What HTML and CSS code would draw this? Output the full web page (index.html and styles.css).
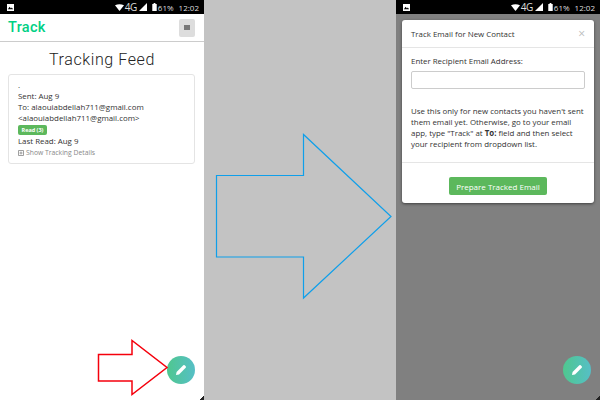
FILE: index.html
```html
<!DOCTYPE html>
<html lang="en">
<head>
    <meta charset="UTF-8">
    <title>Track</title>
    <link rel="stylesheet" href="styles.css">
</head>
<body>

    <div class="phone phone-left">
        <div class="statusbar">
            <svg class="pic" viewBox="0 0 8 8"><path d="M0 0h8v8H0z" fill="#fff"/><path d="M1 6l2-3 1.500 2 1-1L7 6z" fill="#000"/></svg>
            <div class="status-right">
                <svg class="wifi" viewBox="0 0 12 9"><path d="M0 1.500Q6-1.500 12 1.500L6 9z" fill="#fff"/></svg>
                <span class="net">4G</span>
                <svg class="signal" viewBox="0 0 8 8"><path d="M8 0v8H0z" fill="#fff"/></svg>
                <svg class="battery" viewBox="0 0 5 9"><path d="M1.500 0h2v1H5v8H0V1h1.500z" fill="#fff"/></svg>
                <span>61%</span>
                <span class="clock">12:02</span>
            </div>
        </div>
        <div class="navbar">
            <span class="brand">Track</span>
            <button class="toggler"><span class="toggler-icon"></span></button>
        </div>
        <h1>Tracking Feed</h1>
        <div class="card">
            <div>.</div>
            <div>Sent: Aug 9</div>
            <div>To: alaouiabdellah711@gmail.com</div>
            <div>&lt;alaouiabdellah711@gmail.com&gt;</div>
            <div class="badge-row"><span class="badge">Read (3)</span></div>
            <div>Last Read: Aug 9</div>
            <div class="details">
                <svg class="plus" viewBox="0 0 6 6"><path d="M.5.500h5v5h-5zM3 1.500v3M1.500 3h3" fill="none" stroke="#888" stroke-width="0.800"/></svg>
                Show Tracking Details
            </div>
        </div>
        <div class="fab">
            <svg viewBox="0 0 12 12"><path d="M1 11l.6-3L8.300 1.300a1 1 0 0 1 1.400 0l1 1a1 1 0 0 1 0 1.400L4 10.400z" fill="#fff"/></svg>
        </div>
        <div class="corner"></div>
    </div>

    <div class="middle"></div>

    <div class="phone phone-right">
        <div class="statusbar">
            <svg class="pic" viewBox="0 0 8 8"><path d="M0 0h8v8H0z" fill="#fff"/><path d="M1 6l2-3 1.500 2 1-1L7 6z" fill="#000"/></svg>
            <div class="status-right">
                <svg class="wifi" viewBox="0 0 12 9"><path d="M0 1.500Q6-1.500 12 1.500L6 9z" fill="#fff"/></svg>
                <span class="net">4G</span>
                <svg class="signal" viewBox="0 0 8 8"><path d="M8 0v8H0z" fill="#fff"/></svg>
                <svg class="battery" viewBox="0 0 5 9"><path d="M1.500 0h2v1H5v8H0V1h1.500z" fill="#fff"/></svg>
                <span>61%</span>
                <span class="clock">12:02</span>
            </div>
        </div>
        <div class="modal">
            <div class="modal-header">
                <span>Track Email for New Contact</span>
                <span class="close">×</span>
            </div>
            <div class="modal-body">
                <label>Enter Recipient Email Address:</label>
                <input type="text" class="email-input">
                <p>Use this only for new contacts you haven't sent them email yet. Otherwise, go to your email app, type "Track" at <b>To:</b> field and then select your recipient from dropdown list.</p>
            </div>
            <div class="modal-footer">
                <button class="prepare">Prepare Tracked Email</button>
            </div>
        </div>
        <div class="fab">
            <svg viewBox="0 0 12 12"><path d="M1 11l.6-3L8.300 1.300a1 1 0 0 1 1.400 0l1 1a1 1 0 0 1 0 1.400L4 10.400z" fill="#fff"/></svg>
        </div>
        <div class="corner"></div>
    </div>

    <!-- the two arrows drawn over the screenshots -->
    <svg class="arrows" viewBox="0 0 600 400">
        <path d="M98.500 354.500H132V340.500L167 367.500L132 394.500V381H98.500z" fill="#fff" stroke="#f5000c" stroke-width="1.500"/>
        <path d="M216.500 175.500H303.500V134.500L391 216.500L303.500 298V257H216.500z" fill="none" stroke="#0f9fea" stroke-width="1.200"/>
    </svg>

</body>
</html>
```

FILE: styles.css
```css
* {
    margin: 0;
    padding: 0;
    box-sizing: border-box;
}
body {
    display: flex;
    width: 600px;
    height: 400px;
    overflow: hidden;
    background-color: #c3c3c3;
    font-family: "Open Sans", sans-serif;
    color: #333;
}
.phone {
    position: relative;
    width: 204px;
    height: 400px;
    overflow: hidden;
    flex-shrink: 0;
}
.phone-left {
    background-color: white;
}
.phone-right {
    background-color: #808080;
}
.middle {
    flex-grow: 1;
    background-color: #c3c3c3;
}
.arrows {
    position: absolute;
    top: 0;
    left: 0;
    width: 600px;
    height: 400px;
}
.statusbar {
    display: flex;
    justify-content: space-between;
    align-items: center;
    height: 14px;
    padding: 0 5px 0 7px;
    background-color: black;
    color: #ddd;
    font-size: 8px;
}
.pic {
    width: 7px;
    height: 7px;
}
.status-right {
    display: flex;
    align-items: center;
    gap: 1px;
}
.wifi {
    width: 9px;
    height: 7px;
}
.net {
    font-size: 10px;
    letter-spacing: -0.5px;
    margin-right: 1px;
}
.signal {
    width: 8px;
    height: 8px;
    margin-right: 4px;
}
.battery {
    width: 5px;
    height: 8px;
}
.clock {
    margin-left: 4px;
}
.navbar {
    display: flex;
    justify-content: space-between;
    align-items: center;
    height: 28px;
    padding: 0 9px 0 8px;
    border-bottom: 1px solid #ccc;
}
.brand {
    font-family: "Roboto", sans-serif;
    font-size: 14.500px;
    font-weight: 500;
    letter-spacing: 0.3px;
    color: #00d084;
}
.toggler {
    display: flex;
    justify-content: center;
    align-items: center;
    width: 16px;
    height: 18px;
    background-color: #ddd;
    border: none;
    border-radius: 2px;
}
.toggler-icon {
    width: 6px;
    height: 5px;
    background-color: #777;
}
h1 {
    margin-top: 8px;
    font-family: "Roboto", sans-serif;
    font-size: 16px;
    font-weight: 300;
    line-height: 20px;
    letter-spacing: 0.6px;
    text-align: center;
    color: #222;
}
.card {
    margin: 4px 9px 0 8px;
    padding: 5px 9px 5px;
    border: 1px solid #e4e4e4;
    border-radius: 3px;
    font-size: 7.900px;
    line-height: 11px;
}
.badge-row {
    height: 11px;
}
.badge {
    display: block;
    width: 29px;
    margin-top: 1px;
    background-color: #5cb85c;
    border-radius: 2px;
    color: white;
    font-size: 5.500px;
    font-weight: bold;
    line-height: 10px;
    text-align: center;
}
.details {
    display: flex;
    align-items: center;
    gap: 2px;
    color: #888;
    font-size: 6.800px;
}
.plus {
    width: 6px;
    height: 6px;
}
.fab {
    position: absolute;
    left: 167px;
    top: 356px;
    width: 28px;
    height: 28px;
    display: flex;
    justify-content: center;
    align-items: center;
    border-radius: 50%;
    background: linear-gradient(90deg, #4fc78f, #56bfc6);
}
.fab svg {
    width: 12px;
    height: 12px;
}
.corner {
    position: absolute;
    right: 0;
    bottom: 0;
    width: 4px;
    height: 4px;
    background: linear-gradient(135deg, transparent 50%, #222 50%);
}
.modal {
    margin: 6px 6px 0;
    background-color: white;
    border-radius: 3px;
    box-shadow: 0 1px 3px rgba(0, 0, 0, 0.5);
}
.modal-header {
    display: flex;
    justify-content: space-between;
    align-items: center;
    height: 28px;
    padding: 0 9px;
    border-bottom: 1px solid #e5e5e5;
    font-size: 7.900px;
}
.close {
    font-size: 12px;
    color: #bbb;
}
.modal-body {
    padding: 8px 8px 12px 9px;
    font-size: 7.900px;
    line-height: 11px;
}
label {
    display: block;
    margin-bottom: 4px;
}
.email-input {
    display: block;
    width: 174px;
    height: 18px;
    border: 1px solid #ccc;
    border-radius: 2px;
    margin-bottom: 17px;
}
.modal-footer {
    display: flex;
    justify-content: center;
    padding: 14px 0 8px;
    border-top: 1px solid #e5e5e5;
}
.prepare {
    width: 98px;
    height: 18px;
    background-color: #5cb85c;
    border: none;
    border-radius: 2px;
    color: white;
    font-family: "Open Sans", sans-serif;
    font-size: 8px;
}
```
